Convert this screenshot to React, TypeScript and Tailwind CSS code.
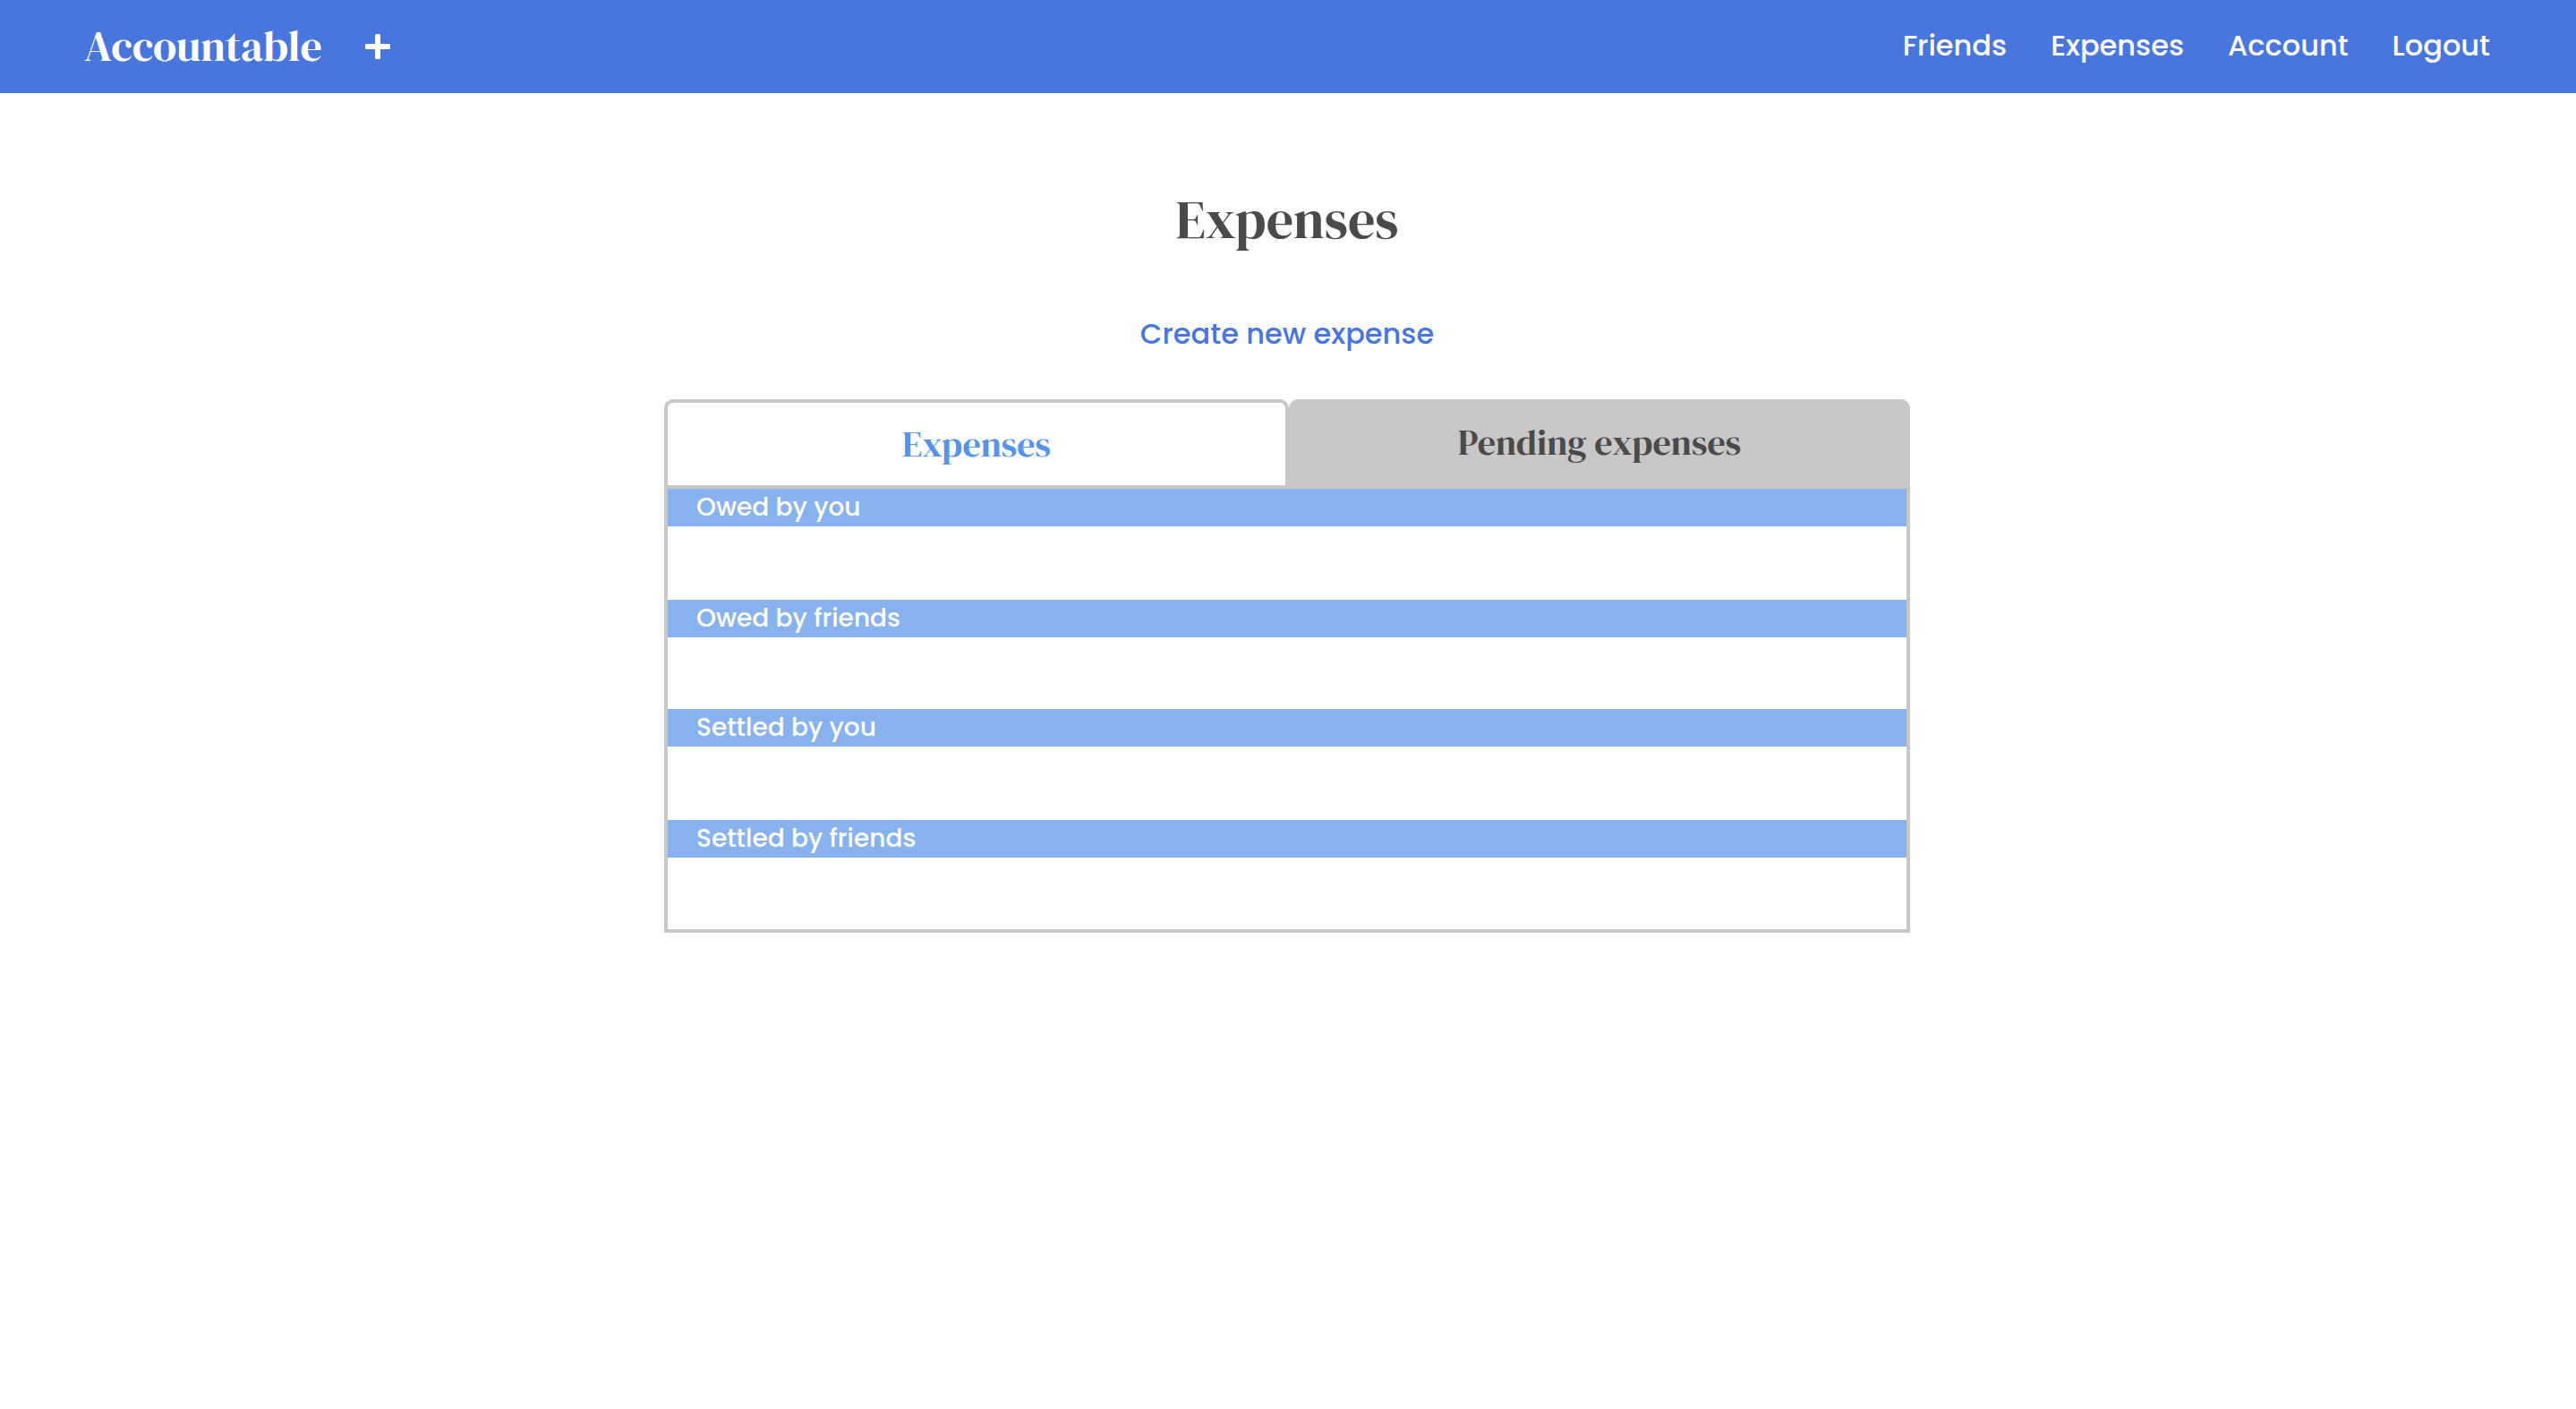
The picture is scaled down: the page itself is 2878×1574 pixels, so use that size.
import React, { useState } from "react";

const links = ["Friends", "Expenses", "Account", "Logout"];
const sections = ["Owed by you", "Owed by friends", "Settled by you", "Settled by friends"];
const serif = "font-['DM_Serif_Display','Liberation_Serif',serif] font-normal";

function PlusIcon() {
  return (
    <svg viewBox="0 0 28 28" className="size-7" fill="currentColor" aria-hidden="true">
      <rect x="0" y="11" width="28" height="6" rx="1.5" />
      <rect x="11" y="0" width="6" height="28" rx="1.5" />
    </svg>
  );
}

export default function App() {
  const [tab, setTab] = useState(0);
  const tabClass = (active: boolean) =>
    `grow rounded-t-[10px] border-4 border-[#c9c6c7] text-[40px] leading-[48px] ${
      active ? "basis-3 bg-white text-[#5594e7]" : "basis-2 bg-[#c9c6c7] pb-1 text-[#4a4a4a]"
    }`;

  return (
    <div className="min-h-screen bg-white font-[Poppins,Inter,sans-serif] font-medium">
      <header className="flex h-[104px] items-center justify-between bg-[#4876dc] pr-24 pl-[94px] text-white">
        <div className="flex items-center gap-12">
          <a href="#" className={`${serif} pb-0.5 text-[48px] leading-[64px]`}>
            Accountable
          </a>
          <button type="button" aria-label="Add expense">
            <PlusIcon />
          </button>
        </div>
        <nav className="flex gap-[49px] pb-0.5 text-[32px] leading-[48px]">
          {links.map((l) => (
            <a key={l} href="#">
              {l}
            </a>
          ))}
        </nav>
      </header>

      <main className="flex flex-col items-center pr-0.5">
        <h1 className={`${serif} mt-[101px] text-[60px] leading-[80px] text-[#4a4a4a]`}>Expenses</h1>
        <a href="#" className="mt-16 text-[32px] leading-[48px] text-[#4876dc]">
          Create new expense
        </a>
        <section className="mt-[49px] w-[48.4%]">
          <div className="flex h-25" role="tablist">
            {["Expenses", "Pending expenses"].map((t, i) => (
              <button
                key={t}
                type="button"
                role="tab"
                aria-selected={tab === i}
                onClick={() => setTab(i)}
                className={`${serif} ${tabClass(tab === i)}`}
              >
                {t}
              </button>
            ))}
          </div>
          <div className="border-4 border-t-0 border-[#c9c6c7]">
            {sections.map((s) => (
              <div key={s} className="odd:pb-[82px] even:pb-20">
                <h2 className="bg-[#87b2ed] px-8 text-[28px] leading-[42px] text-white">{s}</h2>
              </div>
            ))}
          </div>
        </section>
      </main>
    </div>
  );
}
